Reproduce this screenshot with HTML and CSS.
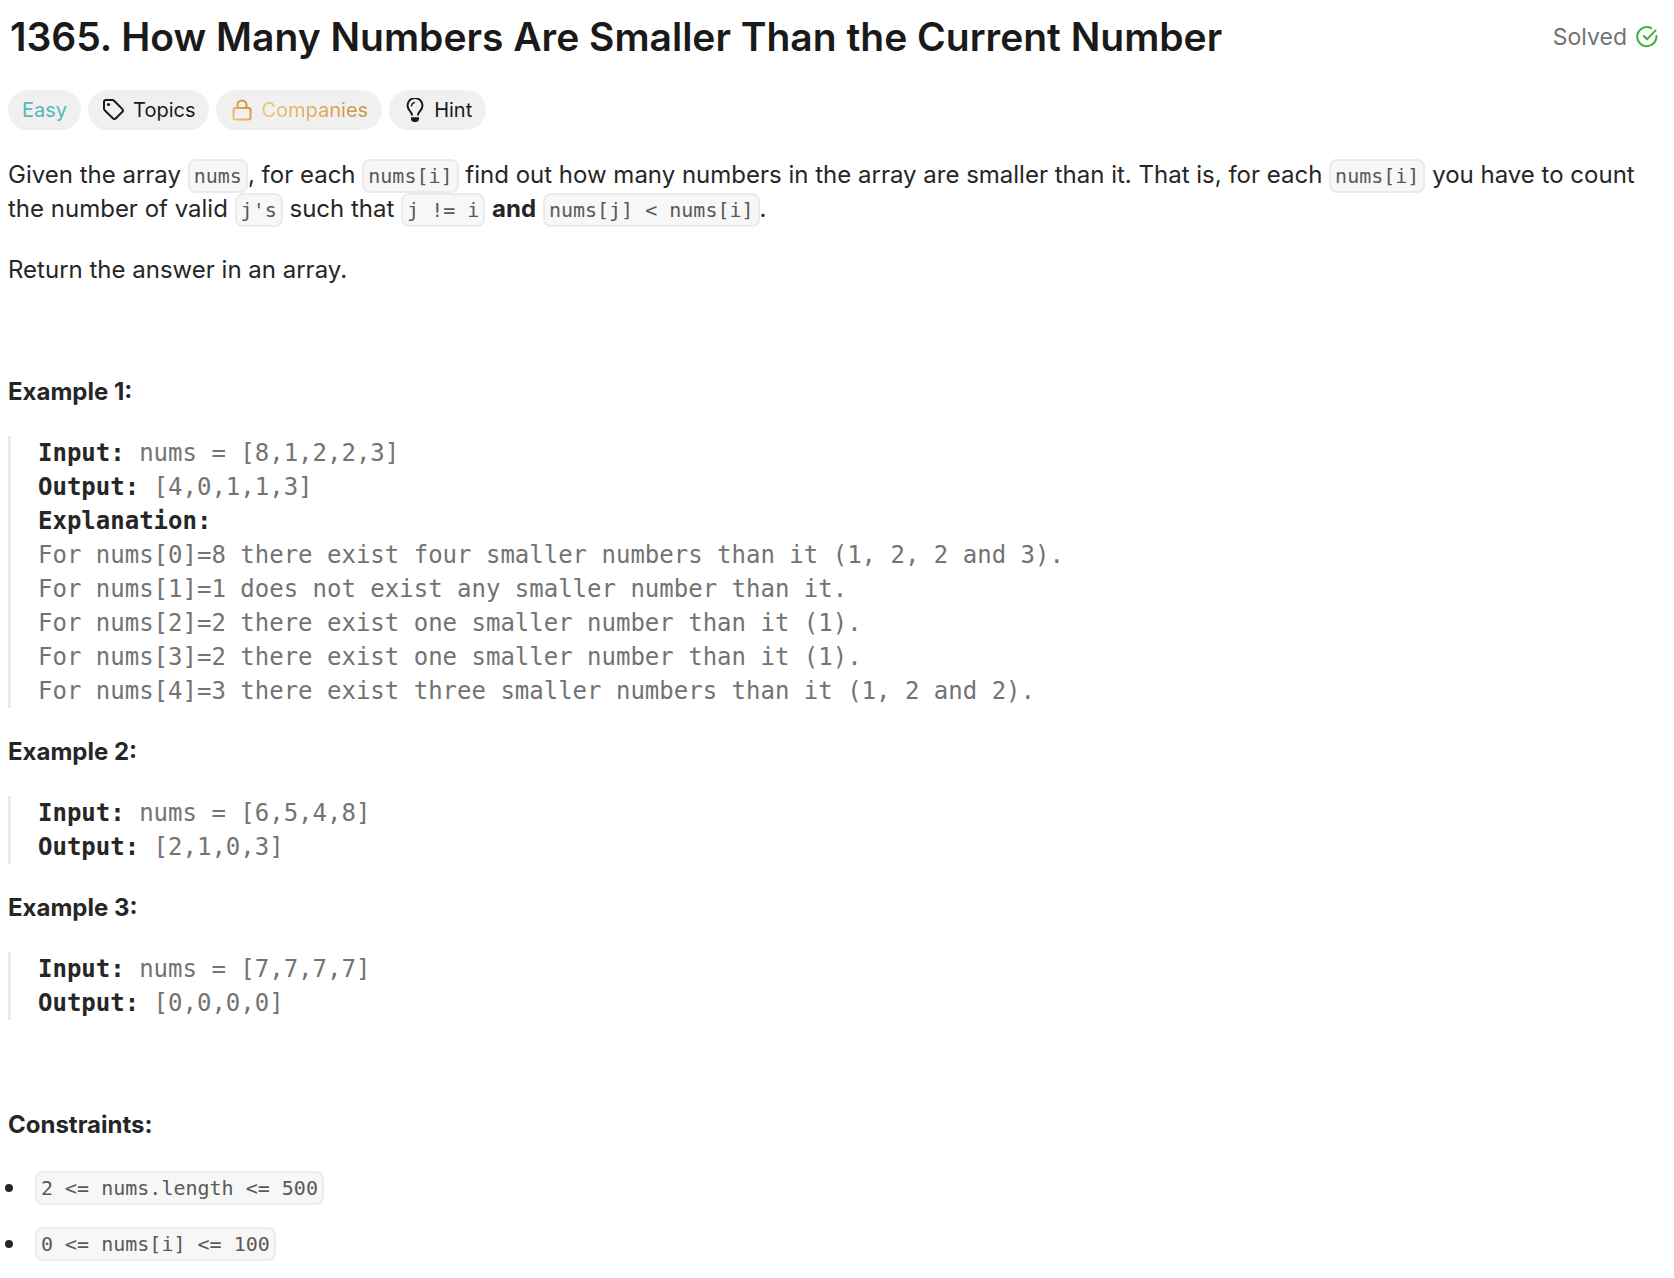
FILE: index.html
```html
<!DOCTYPE html>
<html lang="en">
<head>
<meta charset="utf-8">
<meta name="viewport" content="width=device-width, initial-scale=1">
<title>1365. How Many Numbers Are Smaller Than the Current Number</title>
<link rel="stylesheet" href="styles.css">
</head>
<body>
<main class="problem">
  <header class="header">
    <h1 class="title">1365. How Many Numbers Are Smaller Than the Current Number</h1>
    <div class="status">
      <span>Solved</span>
      <svg class="status-icon" viewBox="0 0 24 24" aria-hidden="true"><path d="M16.200 3.100A9.600 9.600 0 1 0 21.400 11"/><path d="M8.800 11l3.200 3.200L20.600 5.400"/></svg>
    </div>
  </header>

  <div class="tags">
    <span class="tag tag-easy">Easy</span>
    <button class="tag" type="button">
      <svg class="icon" viewBox="0 0 24 24" aria-hidden="true"><path d="M2 4v6.400a3 3 0 0 0 .9 2.100l7.900 7.800a2.200 2.200 0 0 0 3.100 0l6.300-6.300a2.200 2.200 0 0 0 0-3.100L12.300 3a3 3 0 0 0-2.100-.9H4A2 2 0 0 0 2 4z"/><circle class="fill" cx="6.500" cy="6.500" r="1.600"/></svg>
      Topics
    </button>
    <button class="tag" type="button">
      <svg class="icon" viewBox="0 0 24 24" aria-hidden="true">
        <defs><linearGradient id="gold" gradientUnits="userSpaceOnUse" x1="3" y1="22" x2="21" y2="4"><stop offset="0" stop-color="#f3c47e"/><stop offset="1" stop-color="#c98a27"/></linearGradient></defs>
        <rect x="3.500" y="10" width="17" height="11.500" rx="2" stroke="url(#gold)"/><path d="M7.500 10V7a4.500 4.500 0 0 1 9 0v3" stroke="url(#gold)"/></svg>
      <span class="gold-text">Companies</span>
    </button>
    <button class="tag" type="button">
      <svg class="icon" viewBox="0 0 24 24" aria-hidden="true"><path d="M9 16.800c0-2.800-4.500-4.600-4.500-9.200a7.500 7.500 0 0 1 15 0c0 4.600-4.500 6.400-4.500 9.200"/><path class="thin" d="M8.400 7.800a4 4 0 0 1 2.900-3.300"/><path class="fill" d="M8 19.200h8v1.300a3.500 3.500 0 0 1-3.500 3.500h-1a3.500 3.500 0 0 1-3.500-3.500z"/></svg>
      Hint
    </button>
  </div>

  <section class="description">
    <p>Given the array <code>nums</code>, for each <code>nums[i]</code> find out how many numbers in the array are smaller than it. That is, for each <code>nums[i]</code> you have to count the number of valid <code>j's</code> such that <code>j != i</code> <strong>and</strong> <code>nums[j] &lt; nums[i]</code>.</p>
    <p>Return the answer in an array.</p>
    <p>&nbsp;</p>
    <p><strong>Example 1:</strong></p>
<pre><strong>Input:</strong> nums = [8,1,2,2,3]
<strong>Output:</strong> [4,0,1,1,3]
<strong>Explanation:</strong>
For nums[0]=8 there exist four smaller numbers than it (1, 2, 2 and 3).
For nums[1]=1 does not exist any smaller number than it.
For nums[2]=2 there exist one smaller number than it (1).
For nums[3]=2 there exist one smaller number than it (1).
For nums[4]=3 there exist three smaller numbers than it (1, 2 and 2).</pre>
    <p><strong>Example 2:</strong></p>
<pre><strong>Input:</strong> nums = [6,5,4,8]
<strong>Output:</strong> [2,1,0,3]</pre>
    <p><strong>Example 3:</strong></p>
<pre><strong>Input:</strong> nums = [7,7,7,7]
<strong>Output:</strong> [0,0,0,0]</pre>
    <p>&nbsp;</p>
    <p><strong>Constraints:</strong></p>
    <ul>
      <li><code>2 &lt;= nums.length &lt;= 500</code></li>
      <li><code>0 &lt;= nums[i] &lt;= 100</code></li>
    </ul>
  </section>
</main>
</body>
</html>
```
FILE: styles.css
```css
* {
  box-sizing: border-box;
}

body {
  margin: 0;
  background: #fff;
  color: #262626;
  font: 400 24px/34px Inter, sans-serif;
}

.problem {
  padding: 12px 8px 0;
}

.header {
  display: flex;
  align-items: center;
  justify-content: space-between;
  padding: 0 7px 0 2px;
}

.title {
  margin: 0;
  color: #1a1a1a;
  font-size: 39px;
  font-weight: 600;
  line-height: 50px;
}

.status {
  display: flex;
  align-items: center;
  gap: 8px;
  color: #737373;
  font-size: 23px;
}

.status-icon {
  width: 24px;
  height: 24px;
  fill: none;
  stroke: #3fb03a;
  stroke-width: 2;
  stroke-linecap: round;
  stroke-linejoin: round;
}

.tags {
  display: flex;
  flex-wrap: wrap;
  gap: 7px;
  margin-top: 28px;
}

.tag {
  display: flex;
  align-items: center;
  gap: 7px;
  height: 40px;
  padding: 0 14px;
  border: 0;
  border-radius: 20px;
  background: #f0f0f0;
  color: #1a1a1a;
  font: 400 20px/40px Inter, sans-serif;
}

.tag-easy {
  color: #56b8b8;
}

.gold-text {
  background: linear-gradient(90deg, #f0c27f, #cc8f33);
  background-clip: text;
  color: transparent;
}

.icon {
  width: 24px;
  height: 24px;
  fill: none;
  stroke: currentColor;
  stroke-width: 2;
  stroke-linecap: round;
  stroke-linejoin: round;
}

.icon .fill {
  fill: currentColor;
  stroke: none;
}

.icon .thin {
  stroke-width: 1.5;
}

.description {
  display: flex;
  flex-direction: column;
  gap: 27px;
  margin-top: 28px;
}

p,
pre,
ul {
  margin: 0;
}

strong {
  font-weight: 700;
}

code {
  padding: 3px 4px;
  border: 2px solid #ebebeb;
  border-radius: 8px;
  background: #f7f7f7;
  color: #595959;
  font: 20px/24px "DejaVu Sans Mono", monospace;
}

pre {
  padding-left: 27px;
  border-left: 3px solid #ebebeb;
  color: #737373;
  font: 24px/34px "DejaVu Sans Mono", monospace;
  white-space: pre-wrap;
}

pre strong {
  color: #262626;
}

ul {
  display: flex;
  flex-direction: column;
  gap: 22px;
  margin: 2px 0 0 -3px;
  padding: 0;
  list-style: none;
}

li {
  display: flex;
  align-items: center;
  gap: 22px;
}

li::before {
  content: "";
  width: 8px;
  height: 8px;
  border-radius: 50%;
  background: #262626;
}
```
